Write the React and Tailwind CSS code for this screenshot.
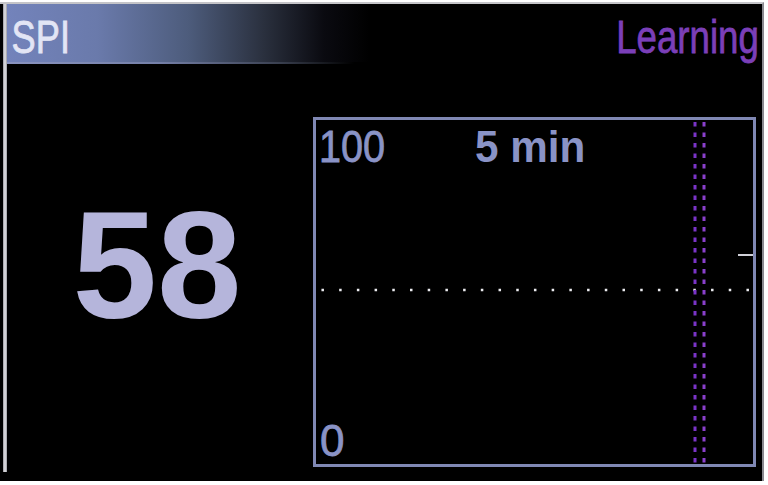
import React from "react";

function Chart() {
  const dots = [];
  const step = 425 / 24;
  for (let i = 0; i <= 24; i++) dots.push(6.7 + i * step);
  const vdots = [];
  for (let y = 2; y < 346; y += 10.5) vdots.push(y);
  return (
    <div className="relative w-[443px] h-[350px] border-[3px] border-[#8088b4] bg-black">
      <svg className="absolute inset-0" width="437" height="344" viewBox="0 0 437 344">
        {dots.map((x, i) => (
          <rect key={i} x={x - 1.25} y={168.75} width="2.5" height="2.5" fill="#ececf0" />
        ))}
        {vdots.map((y, i) => (
          <g key={i}>
            <rect x={377.5} y={y} width="3" height="4.5" fill="#7a34c8" />
            <rect x={386.5} y={y} width="3" height="4.5" fill="#8a40cc" />
          </g>
        ))}
        <rect x={422} y={134} width="15" height="2" fill="#d0d0d8" />
      </svg>
      <div className="absolute left-[3px] top-[5px] text-[44px] leading-none text-[#8a93c6] origin-left scale-x-[0.9] [-webkit-text-stroke:0.8px_#8a93c6]">
        100
      </div>
      <div className="absolute left-[159px] top-[5px] text-[44px] leading-none font-bold text-[#8a93c6] origin-left scale-x-[0.96]">
        5 min
      </div>
      <div className="absolute left-[4px] top-[299px] text-[44px] leading-none text-[#8a93c6] [-webkit-text-stroke:0.8px_#8a93c6]">
        0
      </div>
    </div>
  );
}

export default function App() {
  return (
    <div
      className="w-[768px] h-[485px] bg-white overflow-hidden pt-[2px] pr-[4px] pb-[4px]"
      style={{ fontFamily: '"Liberation Sans", Arial, sans-serif' }}
    >
      <div className="w-full h-full bg-black border-t-2 border-[#c4c4c8] border-r-2 border-r-[#8a8a90] flex">
        <div className="ml-[3px] w-[4px] mb-[9px] bg-[linear-gradient(to_right,#9a9aa0,#e4e4e8,#9a9aa0)]" />
        <div className="flex-1 flex flex-col">
          <div className="h-[58px] flex items-center justify-between bg-[linear-gradient(to_right,#7383bb_0%,#6a7aab_12%,#4d5c7c_24%,#2a303e_34%,#0a0a10_42%,#000_48%)]">
            <div className="pl-[6px] text-[47px] leading-none text-[#e2e5f5] origin-left scale-x-[0.77] mt-[6px] [-webkit-text-stroke:0.8px_#e2e5f5]">
              SPI
            </div>
            <div className="pr-[4px] text-[47px] leading-none text-[#7b3fb8] origin-right scale-x-[0.78] mt-[6px] [-webkit-text-stroke:0.8px_#7b3fb8]">
              Learning
            </div>
          </div>
          <div className="h-[2px] bg-[linear-gradient(to_right,#8a94c0_0%,#7580a8_20%,#3a4050_36%,#000_46%)]" />
          <div className="flex-1 flex">
            <div className="w-[306px] flex justify-center pt-[125px]">
              <div className="text-[152px] leading-none font-bold text-[#b5b5db] -ml-[6px]">
                58
              </div>
            </div>
            <div className="pt-[53px]">
              <Chart />
            </div>
          </div>
        </div>
      </div>
    </div>
  );
}
